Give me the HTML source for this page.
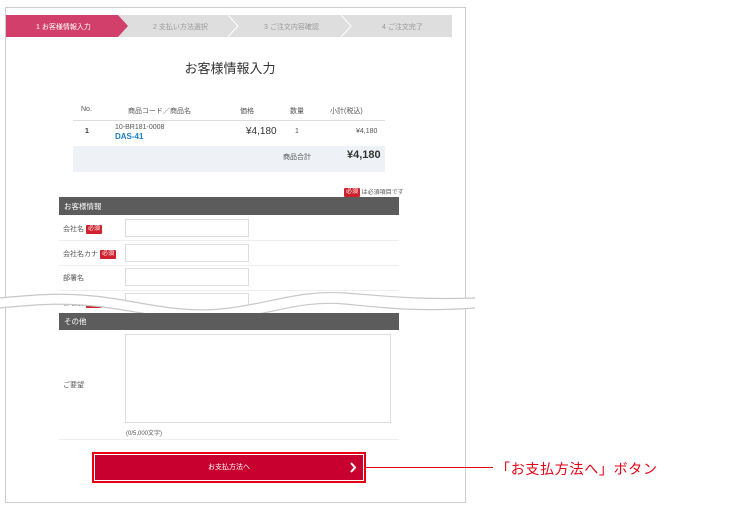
<!DOCTYPE html>
<html><head><meta charset="utf-8"><style>
*{margin:0;padding:0;box-sizing:border-box}
body{width:730px;height:513px;background:#fff;position:relative;overflow:hidden;font-family:"Liberation Sans","Noto Sans CJK JP",sans-serif;color:#333}
.a{position:absolute}
.frame{left:5px;top:7px;width:461px;height:496px;border:1px solid #ccc}
.t{font-size:7px;color:#555;white-space:nowrap}
.req{display:inline-block;background:#d0202c;color:#fff;font-size:6px;padding:0 2px;line-height:9px;border-radius:1px;vertical-align:middle}
.inp{position:absolute;left:125px;width:124px;height:18px;border:1px solid #ddd;background:#fff}
.hr{position:absolute;left:59px;width:340px;height:1px;background:#eee}
</style></head><body>
<div class="a frame"></div>
<svg class="a" style="left:6px;top:15px" width="446" height="23">
<rect x="0" y="0" width="446" height="22" fill="#dedede"/>
<polygon points="0,0 112,0 122,11 112,22 0,22" fill="#d23f6a"/>
<polyline points="222,0 232,11 222,22" fill="none" stroke="#fff" stroke-width="1"/>
<polyline points="335,0 345,11 335,22" fill="none" stroke="#fff" stroke-width="1"/>
<text x="30" y="14" font-size="7" fill="#fff" font-family="Liberation Sans,Noto Sans CJK JP,sans-serif">1 お客様情報入力</text>
<text x="147" y="14" font-size="7" fill="#999" font-family="Liberation Sans,Noto Sans CJK JP,sans-serif">2 支払い方法選択</text>
<text x="258" y="14" font-size="7" fill="#999" font-family="Liberation Sans,Noto Sans CJK JP,sans-serif">3 ご注文内容確認</text>
<text x="376" y="14" font-size="7" fill="#999" font-family="Liberation Sans,Noto Sans CJK JP,sans-serif">4 ご注文完了</text>
</svg>
<div class="a" style="left:0;width:460px;top:58px;text-align:center;font-size:13px;color:#333">お客様情報入力</div>
<div class="a t" style="left:81px;top:106px">No.</div>
<div class="a t" style="left:128px;top:106px">商品コード／商品名</div>
<div class="a t" style="left:240px;top:106px">価格</div>
<div class="a t" style="left:290px;top:106px">数量</div>
<div class="a t" style="left:330px;top:106px">小計(税込)</div>
<div class="a" style="left:73px;top:120px;width:312px;height:1px;background:#ddd"></div>
<div class="a t" style="left:85px;top:128px;font-weight:bold;color:#333">1</div>
<div class="a t" style="left:115px;top:124px">10-BR181-0008</div>
<div class="a" style="left:115px;top:132px;font-size:8px;font-weight:bold;color:#1a7dc4">DAS-41</div>
<div class="a" style="left:246px;top:126px;font-size:10px;color:#333">¥4,180</div>
<div class="a t" style="left:295px;top:128px">1</div>
<div class="a t" style="left:356px;top:128px">¥4,180</div>
<div class="a" style="left:73px;top:146px;width:312px;height:26px;background:#eef1f5"></div>
<div class="a t" style="left:283px;top:152px">商品合計</div>
<div class="a" style="left:347px;top:149px;font-size:11px;font-weight:bold;color:#333">¥4,180</div>
<div class="a t" style="left:344px;top:187px;font-size:6px"><span class="req">必須</span> は必須項目です</div>
<div class="a" style="left:59px;top:197px;width:340px;height:18px;background:#5c5c5c;color:#fff;font-size:7.5px;padding:4px 5px">お客様情報</div>
<div class="a t" style="left:63px;top:224px">会社名 <span class="req">必須</span></div>
<div class="inp" style="top:219px"></div>
<div class="hr" style="top:240px"></div>
<div class="a t" style="left:63px;top:249px">会社名カナ <span class="req">必須</span></div>
<div class="inp" style="top:244px"></div>
<div class="hr" style="top:265px"></div>
<div class="a t" style="left:63px;top:273px">部署名</div>
<div class="inp" style="top:268px"></div>
<div class="hr" style="top:290px"></div>
<div class="a t" style="left:63px;top:298px">お名前 <span class="req">必須</span></div>
<div class="inp" style="top:293px"></div>
<svg class="a" style="left:0;top:290px" width="475" height="30">
<path d="M0,8 C40,4 70,2 110,8 C150,14 185,24 230,18 C275,12 300,0 345,3 C385,6 420,10 475,8 L475,18 C420,22 385,18 345,14 C300,12 275,24 230,28 C185,32 150,22 110,18 C70,12 40,14 0,18 Z" fill="#fff"/>
<path d="M0,8 C40,4 70,2 110,8 C150,14 185,24 230,18 C275,12 300,0 345,3 C385,6 420,10 475,8" fill="none" stroke="#c8c8c8" stroke-width="1.2"/>
<path d="M0,18 C40,14 70,12 110,18 C150,24 185,32 230,28 C275,24 300,10 345,14 C385,18 420,22 475,18" fill="none" stroke="#c8c8c8" stroke-width="1.2"/>
</svg>
<div class="a" style="left:59px;top:313px;width:340px;height:17px;background:#5c5c5c;color:#fff;font-size:7.5px;padding:3px 5px">その他</div>
<div class="a t" style="left:63px;top:380px">ご要望</div>
<div class="a" style="left:125px;top:334px;width:266px;height:89px;border:1px solid #ddd"></div>
<div class="a t" style="left:126px;top:428px;font-size:6px">(0/5,000文字)</div>
<div class="a" style="left:59px;top:439px;width:340px;height:1px;background:#eee"></div>
<div class="a" style="left:92px;top:452px;width:274px;height:31px;border:2px solid #e60012"></div>
<div class="a" style="left:95px;top:455px;width:268px;height:25px;background:#c8002f;color:#fff;font-size:7px;text-align:center;line-height:25px">お支払方法へ</div>
<svg class="a" style="left:349px;top:462px" width="8" height="11"><polyline points="2,1 6,5.5 2,10" fill="none" stroke="#fff" stroke-width="2"/></svg>
<div class="a" style="left:366px;top:467px;width:127px;height:1px;background:#e60012"></div>
<div class="a" style="left:496px;top:459px;font-size:14px;letter-spacing:0.7px;color:#e60012;white-space:nowrap">「お支払方法へ」ボタン</div>
</body></html>
